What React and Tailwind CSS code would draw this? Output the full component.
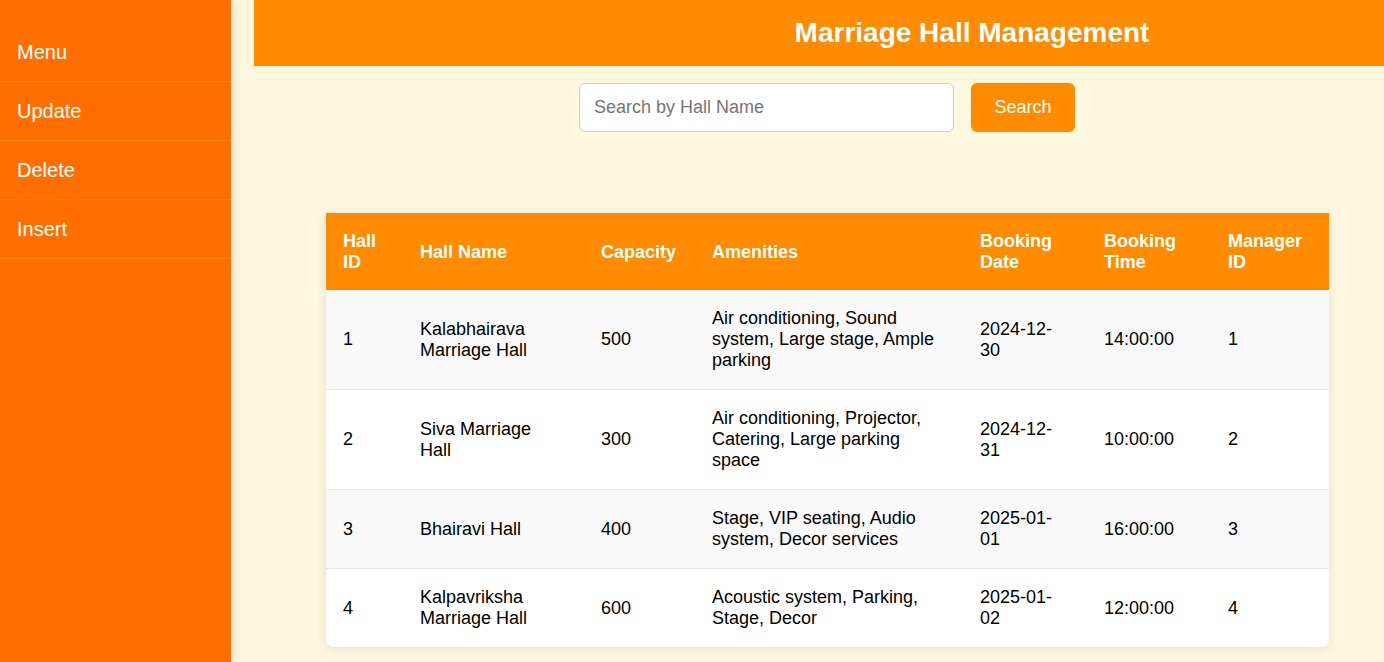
import React, { useState } from "react";

const halls = [
  {
    id: 1,
    name: "Kalabhairava Marriage Hall",
    capacity: 500,
    amenities: "Air conditioning, Sound system, Large stage, Ample parking",
    date: "2024-12-30",
    time: "14:00:00",
    manager: 1,
  },
  {
    id: 2,
    name: "Siva Marriage Hall",
    capacity: 300,
    amenities: "Air conditioning, Projector, Catering, Large parking space",
    date: "2024-12-31",
    time: "10:00:00",
    manager: 2,
  },
  {
    id: 3,
    name: "Bhairavi Hall",
    capacity: 400,
    amenities: "Stage, VIP seating, Audio system, Decor services",
    date: "2025-01-01",
    time: "16:00:00",
    manager: 3,
  },
  {
    id: 4,
    name: "Kalpavriksha Marriage Hall",
    capacity: 600,
    amenities: "Acoustic system, Parking, Stage, Decor",
    date: "2025-01-02",
    time: "12:00:00",
    manager: 4,
  },
];

const menuItems = ["Menu", "Update", "Delete", "Insert"];

const App = () => {
  const [query, setQuery] = useState("");

  return (
    <div
      className="min-h-screen h-[662px] flex bg-[#fff8e1] overflow-hidden"
      style={{ fontFamily: '"Liberation Sans", Arial, sans-serif' }}
    >
      {/* sidebar */}
      <aside className="w-[231px] shrink-0 bg-[#ff6f00] pt-[23px] shadow-[2px_0_10px_rgba(0,0,0,0.15)] z-10">
        {menuItems.map((item) => (
          <div
            key={item}
            className="pl-[17px] pt-[18px] pb-[17px] text-[20px] leading-[23px] text-white border-b border-[#ff8019]"
          >
            {item}
          </div>
        ))}
      </aside>

      <main className="flex-1 ml-[23px] flex flex-col">
        <header className="h-[66px] bg-[#ff8c00] flex items-center justify-center pl-[306px]">
          <h1 className="text-[28px] font-bold text-white leading-none">Marriage Hall Management</h1>
        </header>

        <div className="mt-[17px] flex justify-center gap-[17px] pl-[16px]">
          <input
            type="text"
            value={query}
            onChange={(e) => setQuery(e.target.value)}
            placeholder="Search by Hall Name"
            className="w-[375px] h-[49px] bg-white border border-[#cccccc] rounded-[6px] px-[14px] text-[18px] text-black placeholder:text-[#757575] focus:outline-none"
          />
          <button className="w-[104px] h-[49px] bg-[#ff8c00] text-white text-[18px] rounded-[6px]">
            Search
          </button>
        </div>

        <div className="mt-[81px] ml-[72px] w-[1003px] rounded-b-[8px] overflow-hidden bg-white shadow-[0_2px_12px_rgba(0,0,0,0.1)]">
          <table className="w-full table-fixed border-collapse text-[18px] leading-[21px] text-black">
            <colgroup>
              <col className="w-[77px]" />
              <col className="w-[181px]" />
              <col className="w-[111px]" />
              <col className="w-[268px]" />
              <col className="w-[124px]" />
              <col className="w-[124px]" />
              <col className="w-[118px]" />
            </colgroup>
            <thead>
              <tr className="bg-[#ff8c00] text-white text-left">
                <th className="px-[17px] pt-[18px] pb-[17px] font-bold">Hall ID</th>
                <th className="px-[17px] pt-[18px] pb-[17px] font-bold">Hall Name</th>
                <th className="px-[17px] pt-[18px] pb-[17px] font-bold">Capacity</th>
                <th className="px-[17px] pt-[18px] pb-[17px] font-bold">Amenities</th>
                <th className="px-[17px] pt-[18px] pb-[17px] font-bold">Booking Date</th>
                <th className="px-[17px] pt-[18px] pb-[17px] font-bold">Booking Time</th>
                <th className="px-[17px] pt-[18px] pb-[17px] font-bold">Manager ID</th>
              </tr>
            </thead>
            <tbody>
              {halls.map((h, i) => (
                <tr
                  key={h.id}
                  className={`${i % 2 === 0 ? "bg-[#f9f9f9]" : "bg-white"} ${i < halls.length - 1 ? "border-b border-[#e6e6e6]" : ""}`}
                >
                  <td className="px-[17px] py-[18px]">{h.id}</td>
                  <td className="px-[17px] py-[18px]">{h.name}</td>
                  <td className="px-[17px] py-[18px]">{h.capacity}</td>
                  <td className="px-[17px] py-[18px]">{h.amenities}</td>
                  <td className="px-[17px] py-[18px]">{h.date}</td>
                  <td className="px-[17px] py-[18px]">{h.time}</td>
                  <td className="px-[17px] py-[18px]">{h.manager}</td>
                </tr>
              ))}
            </tbody>
          </table>
        </div>
      </main>
    </div>
  );
};

export default App;
